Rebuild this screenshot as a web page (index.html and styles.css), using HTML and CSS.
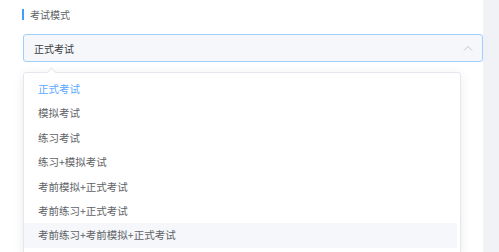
FILE: index.html
```html
<!DOCTYPE html>
<html lang="zh">
<head>
    <meta charset="UTF-8">
    <title>考试模式</title>
    <link rel="stylesheet" href="styles.css">
</head>
<body>
    <div class="page">
        <div class="main">
            <div class="label">考试模式</div>
            <div class="select">
                <span class="value">正式考试</span>
                <svg class="chevron" width="10" height="6" viewBox="0 0 10 6"><path d="M1 5.5 L5 1.5 L9 5.5" fill="none" stroke="#c0c4cc" stroke-width="1"/></svg>
                <div class="dropdown">
                    <div class="arrow"></div>
                    <ul class="options">
                        <li class="active">正式考试</li>
                        <li>模拟考试</li>
                        <li>练习考试</li>
                        <li>练习+模拟考试</li>
                        <li>考前模拟+正式考试</li>
                        <li>考前练习+正式考试</li>
                        <li class="hover">考前练习+考前模拟+正式考试</li>
                    </ul>
                </div>
            </div>
        </div>
        <div class="side"></div>
    </div>
</body>
</html>
```

FILE: styles.css
```css
body {
    margin: 0;
    font-family: "Noto Sans CJK SC", "Noto Sans", sans-serif;
    background: #fff;
}
.page {
    display: flex;
    height: 252px;
    overflow: hidden;
}
.main {
    width: 460px;
    padding: 0 0 0 23px;
}
.side {
    flex: 1;
    background: #f0f2f5;
}
.label {
    position: relative;
    margin-top: 6px;
    height: 17px;
    line-height: 17px;
    font-size: 10px;
    color: #606266;
    padding-left: 7px;
}
.label::before {
    content: "";
    position: absolute;
    left: -1px;
    top: 3px;
    width: 2px;
    height: 11px;
    background: #409eff;
}
.select {
    position: relative;
    margin-top: 11px;
    height: 26px;
    border: 1px solid #a0cfff;
    border-radius: 3px;
    background: #f5f7fa;
    display: flex;
    align-items: center;
    justify-content: space-between;
    padding: 0 9px 0 10px;
}
.value {
    font-size: 10px;
    color: #3a3c40;
}
.chevron {
    display: block;
}
.dropdown {
    position: absolute;
    left: -1px;
    top: 37px;
    width: 436px;
    background: #fff;
    border: 1px solid #e4e7ed;
    border-radius: 3px;
    box-shadow: 0 2px 12px rgba(0, 0, 0, 0.08);
}
.arrow {
    position: absolute;
    top: -4px;
    left: 24px;
    width: 6px;
    height: 6px;
    background: #fff;
    border-left: 1px solid #e4e7ed;
    border-top: 1px solid #e4e7ed;
    transform: rotate(45deg);
}
.options {
    list-style: none;
    margin: 0;
    padding: 4px 0 6px;
}
.options li {
    height: 24.4px;
    line-height: 24.4px;
    padding-left: 14px;
    font-size: 10.5px;
    color: #606266;
}
.options li.active {
    color: #5aa8ff;
}
.options li.hover {
    background: #f5f7fa;
    margin-right: 3px;
}
```
